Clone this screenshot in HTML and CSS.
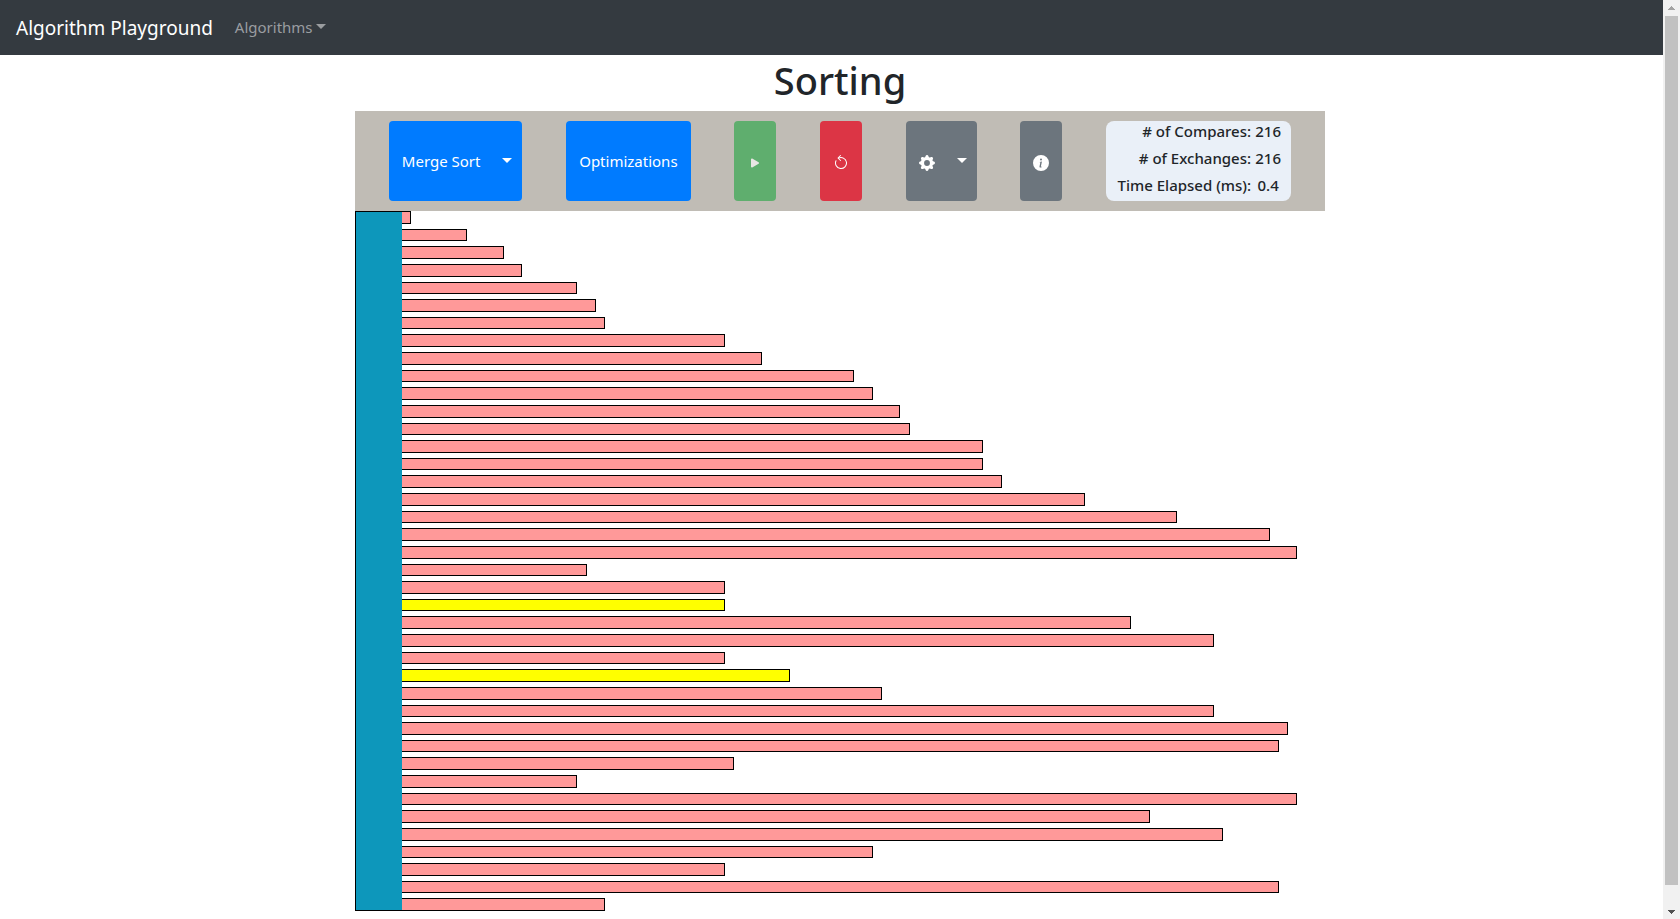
FILE: index.html
```html
<!DOCTYPE html>
<html lang="en">
<head>
<meta charset="utf-8">
<meta name="viewport" content="width=device-width, initial-scale=1">
<title>Algorithm Playground</title>
<link rel="stylesheet" href="styles.css">
</head>
<body>
<nav class="navbar">
  <a class="brand" href="#">Algorithm Playground</a>
  <a class="nav-link" href="#">Algorithms<span class="caret"></span></a>
</nav>

<main class="page">
  <h1 class="title">Sorting</h1>

  <div class="toolbar">
    <div class="btn-group">
      <button class="btn primary" type="button">Merge Sort</button>
      <button class="btn primary toggle" type="button" aria-label="Choose algorithm"><span class="caret"></span></button>
    </div>
    <button class="btn primary" type="button">Optimizations</button>
    <button class="btn success" type="button" aria-label="Play" disabled>
      <svg class="icon" viewBox="0 0 16 16"><path d="M11.596 8.697l-6.363 3.692c-.54.313-1.233-.066-1.233-.697V4.308c0-.63.692-1.01 1.233-.696l6.363 3.692a.802.802 0 010 1.393z"/></svg>
    </button>
    <button class="btn danger" type="button" aria-label="Reset">
      <svg class="icon" viewBox="0 0 16 16"><path d="M12.83 6.706a5 5 0 00-7.103-3.16.5.5 0 11-.454-.892A6 6 0 112.545 5.5a.5.5 0 11.91.417 5 5 0 109.375.789z"/><path d="M7.854.146a.5.5 0 00-.708 0l-2.5 2.5a.5.5 0 000 .708l2.5 2.5a.5.5 0 10.708-.708L5.707 3 7.854.854a.5.5 0 000-.708z"/></svg>
    </button>
    <div class="btn-group">
      <button class="btn secondary" type="button" aria-label="Settings">
        <svg class="icon" viewBox="0 0 16 16"><path d="M9.405 1.05c-.413-1.4-2.397-1.4-2.81 0l-.1.34a1.464 1.464 0 01-2.105.872l-.31-.17c-1.283-.698-2.686.705-1.987 1.987l.169.311c.446.82.023 1.841-.872 2.105l-.34.1c-1.4.413-1.4 2.397 0 2.81l.34.1a1.464 1.464 0 01.872 2.105l-.17.31c-.698 1.283.705 2.686 1.987 1.987l.311-.169a1.464 1.464 0 012.105.872l.1.34c.413 1.4 2.397 1.4 2.81 0l.1-.34a1.464 1.464 0 012.105-.872l.31.17c1.283.698 2.686-.705 1.987-1.987l-.169-.311a1.464 1.464 0 01.872-2.105l.34-.1c1.4-.413 1.4-2.397 0-2.81l-.34-.1a1.464 1.464 0 01-.872-2.105l.17-.31c.698-1.283-.705-2.686-1.987-1.987l-.311.169a1.464 1.464 0 01-2.105-.872l-.1-.34zM8 10.93a2.929 2.929 0 100-5.86 2.929 2.929 0 000 5.858z"/></svg>
      </button>
      <button class="btn secondary toggle" type="button" aria-label="Settings menu"><span class="caret"></span></button>
    </div>
    <button class="btn secondary" type="button" aria-label="Information">
      <svg class="icon" viewBox="0 0 16 16"><path d="M8 16A8 8 0 108 0a8 8 0 000 16zm.93-9.412l-2.29.287-.082.38.45.083c.294.07.352.176.288.469l-.738 3.468c-.194.897.105 1.319.808 1.319.545 0 1.178-.252 1.465-.598l.088-.416c-.2.176-.492.246-.686.246-.275 0-.375-.193-.304-.533L8.93 6.588zM8 5.5a1 1 0 100-2 1 1 0 000 2z"/></svg>
    </button>
    <div class="stats">
      <p class="stat"><span># of Compares:</span><span class="value">216</span></p>
      <p class="stat"><span># of Exchanges:</span><span class="value">216</span></p>
      <p class="stat"><span>Time Elapsed (ms):</span><span class="value">0.4</span></p>
    </div>
  </div>

  <div class="chart">
    <div class="gutter"></div>
    <div class="bars">
      <div class="bar" style="width:1%"></div>
      <div class="bar" style="width:7%"></div>
      <div class="bar" style="width:11%"></div>
      <div class="bar" style="width:13%"></div>
      <div class="bar" style="width:19%"></div>
      <div class="bar" style="width:21%"></div>
      <div class="bar" style="width:22%"></div>
      <div class="bar" style="width:35%"></div>
      <div class="bar" style="width:39%"></div>
      <div class="bar" style="width:49%"></div>
      <div class="bar" style="width:51%"></div>
      <div class="bar" style="width:54%"></div>
      <div class="bar" style="width:55%"></div>
      <div class="bar" style="width:63%"></div>
      <div class="bar" style="width:63%"></div>
      <div class="bar" style="width:65%"></div>
      <div class="bar" style="width:74%"></div>
      <div class="bar" style="width:84%"></div>
      <div class="bar" style="width:94%"></div>
      <div class="bar" style="width:97%"></div>
      <div class="bar" style="width:20%"></div>
      <div class="bar" style="width:35%"></div>
      <div class="bar active" style="width:35%"></div>
      <div class="bar" style="width:79%"></div>
      <div class="bar" style="width:88%"></div>
      <div class="bar" style="width:35%"></div>
      <div class="bar active" style="width:42%"></div>
      <div class="bar" style="width:52%"></div>
      <div class="bar" style="width:88%"></div>
      <div class="bar" style="width:96%"></div>
      <div class="bar" style="width:95%"></div>
      <div class="bar" style="width:36%"></div>
      <div class="bar" style="width:19%"></div>
      <div class="bar" style="width:97%"></div>
      <div class="bar" style="width:81%"></div>
      <div class="bar" style="width:89%"></div>
      <div class="bar" style="width:51%"></div>
      <div class="bar" style="width:35%"></div>
      <div class="bar" style="width:95%"></div>
      <div class="bar" style="width:22%"></div>
    </div>
  </div>
</main>

<div class="scrollbar" aria-hidden="true">
  <svg class="scroll-arrow up" viewBox="0 0 17 16" shape-rendering="crispEdges"><path d="M8 6h1v1h1v1h1v1h1v1H5V9h1V8h1V7h1z"/></svg>
  <div class="scroll-thumb"></div>
  <svg class="scroll-arrow down" viewBox="0 0 17 16" shape-rendering="crispEdges"><path d="M5 7h7v1h-1v1h-1v1H9v1H8v-1H7V9H6V8H5z"/></svg>
</div>
</body>
</html>
```
FILE: styles.css
```css
* {
  box-sizing: border-box;
}

body {
  margin: 0;
  background: #fff;
  color: #212529;
  font: 15px/24px "Noto Sans", "Open Sans", sans-serif;
}

.navbar {
  display: flex;
  align-items: center;
  gap: 22px;
  min-height: 55px;
  padding: 0 16px;
  background: #343a40;
}

.brand,
.nav-link {
  text-decoration: none;
}

.brand {
  color: #fff;
  font-size: 19px;
}

.nav-link {
  display: flex;
  align-items: center;
  gap: 3px;
  padding-bottom: 2px;
  color: #9a9da0;
}

.caret {
  border: 5px solid transparent;
  border-top-color: currentColor;
  border-bottom: 0;
}

.page {
  max-width: 970px;
  margin: 0 auto;
}

.title {
  margin: 0 0 6px;
  font-size: 38px;
  font-weight: 500;
  line-height: 50px;
  text-align: center;
}

.toolbar {
  display: flex;
  justify-content: space-around;
  padding: 10px 12px;
  background: #c0bcb5;
}

.btn-group {
  display: flex;
}

.btn {
  display: flex;
  align-items: center;
  justify-content: center;
  min-height: 80px;
  padding: 0 13px;
  border: 0;
  border-radius: 4px;
  color: #fff;
  font: inherit;
}

.btn-group .btn:first-child {
  border-top-right-radius: 0;
  border-bottom-right-radius: 0;
}

.toggle {
  padding: 0 10px 2px 9px;
  border-top-left-radius: 0;
  border-bottom-left-radius: 0;
}

.primary {
  background: #007bff;
}

.success {
  background: #5fae6e;
  color: #e9e6e4;
}

.danger {
  background: #dc3545;
}

.secondary {
  background: #6c757d;
}

.icon {
  width: 16px;
  height: 16px;
  margin-top: 4px;
  fill: currentColor;
  fill-rule: evenodd;
}

.stats {
  min-width: 185px;
  padding: 0 10px;
  border-radius: 8px;
  background: #eaf0f8;
  font-weight: 500;
}

.stat {
  display: flex;
  justify-content: flex-end;
  gap: 4px;
  margin: 0 0 7px;
  line-height: 20px;
}

.stat:last-child {
  margin: 0;
}

.value {
  min-width: 26px;
  text-align: center;
}

.chart {
  display: flex;
  min-height: 700px;
}

.gutter {
  flex: 0 0 47px;
  border: 1px solid #000;
  border-right: 0;
  background: #0d97bb;
}

.bars {
  display: grid;
  flex: 1;
  grid-auto-rows: 1fr;
  gap: 5px;
}

.bar {
  border: 1px solid #000;
  border-left: 0;
  background: #ff9999;
}

.bar.active {
  background: #ffff00;
}

.scrollbar {
  position: fixed;
  top: 0;
  right: 0;
  bottom: 0;
  display: flex;
  flex-direction: column;
  width: 17px;
  background: #f1f1f1;
}

.scroll-arrow {
  flex: none;
  width: 17px;
  height: 16px;
}

.scroll-arrow.up {
  fill: #a3a3a3;
}

.scroll-arrow.down {
  fill: #505050;
}

.scroll-thumb {
  flex: 1;
  margin: 0 2px 18px;
  background: #c1c1c1;
}
```
